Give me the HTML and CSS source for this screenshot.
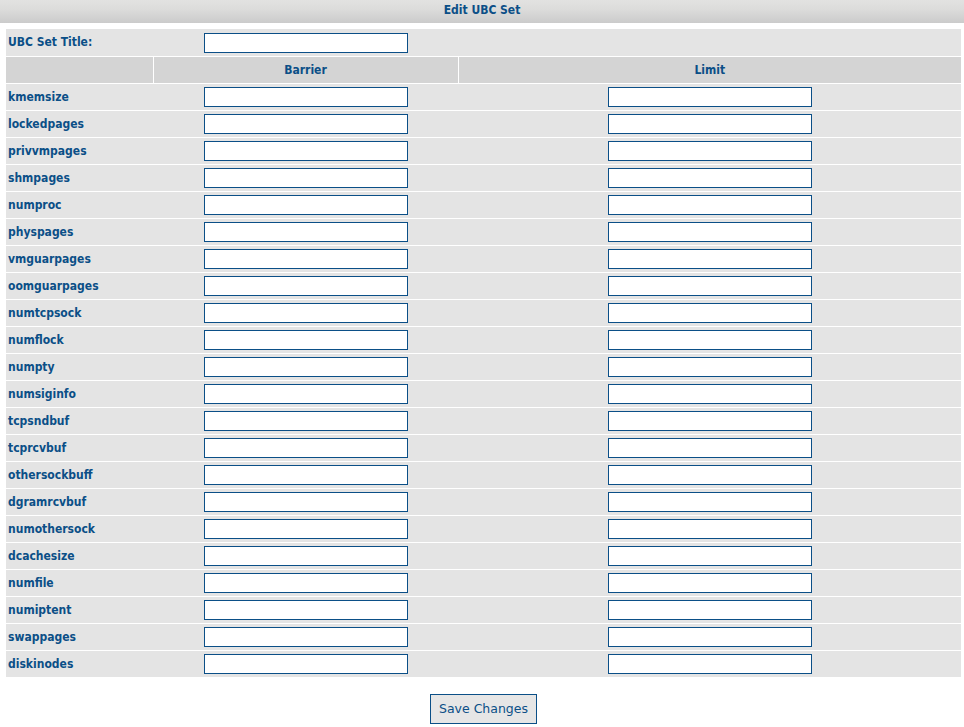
FILE: index.html
```html
<html>
    <head>
        <link rel="stylesheet" href="styles.css">
    </head>
    <body>
        <div class="titlebar">Edit UBC Set</div>
        <form class="ubc-form">
            <table class="ubc-table">
                <colgroup>
                    <col class="c-name">
                    <col class="c-barrier">
                    <col class="c-limit">
                </colgroup>
                <tr class="row">
                    <td class="label">UBC Set Title:</td>
                    <td class="field"><input type="text" name="title"></td>
                    <td></td>
                </tr>
                <tr class="head">
                    <th></th>
                    <th>Barrier</th>
                    <th>Limit</th>
                </tr>
            </table>
            <div class="actions">
                <input type="submit" class="btn" value="Save Changes">
            </div>
        </form>
        <script type="text/javascript">
            (function(){
                var params = ["kmemsize", "lockedpages", "privvmpages", "shmpages", "numproc",
                    "physpages", "vmguarpages", "oomguarpages", "numtcpsock", "numflock",
                    "numpty", "numsiginfo", "tcpsndbuf", "tcprcvbuf", "othersockbuff",
                    "dgramrcvbuf", "numothersock", "dcachesize", "numfile", "numiptent",
                    "swappages", "diskinodes"];

                var table = document.querySelector(".ubc-table");

                for (var i = 0; i < params.length; i++) {
                    var tr = document.createElement("tr");
                    tr.className = "row";
                    tr.innerHTML = '<td class="label">' + params[i] + '</td>' +
                        '<td class="field"><input type="text" name="' + params[i] + '_b"></td>' +
                        '<td class="field"><input type="text" name="' + params[i] + '_l"></td>';
                    table.appendChild(tr);
                }
            })();
        </script>
    </body>
</html>
```

FILE: styles.css
```css
:root {
    --c-text: #0b4f87;
    --c-row: #e4e4e4;
    --c-head: #d4d4d4;
    --c-border: #0b4f87;
    --f-main: "DejaVu Sans Condensed", "DejaVu Sans", Verdana, sans-serif;
    --f-btn: "DejaVu Sans", Verdana, sans-serif;
}
html, body {
    margin: 0;
    padding: 0;
}

body {
    background-color: #fff;
    font-family: var(--f-main);
    font-size: 12px;
    color: var(--c-text);
}

.titlebar {
    height: 23px;
    line-height: 21px;
    text-align: center;
    font-weight: bold;
    background: linear-gradient(to bottom, #e2e2e1 0%, #dcdcdb 40%, #cbcbcb 100%);
}

.ubc-form {
    margin: 0;
    padding: 6px 3px 0 6px;
}

.ubc-table {
    width: 100%;
    table-layout: fixed;
    border-collapse: collapse;
    border-spacing: 0;
    font-family: var(--f-main);
    font-size: 12px;
    color: var(--c-text);
}
.ubc-table .c-name {
    width: 147px;
}
.ubc-table .c-barrier {
    width: 305px;
}

.ubc-table td,
.ubc-table th {
    height: 27px;
    padding: 0;
    background-color: var(--c-row);
    border-bottom: 1px solid #fff;
    vertical-align: middle;
}
.ubc-table th {
    background-color: var(--c-head);
    text-align: center;
    font-weight: bold;
}
.ubc-table th + th {
    border-left: 1px solid #fff;
}
.ubc-table .label {
    padding-left: 2px;
    font-weight: bold;
}
.ubc-table .field {
    text-align: center;
}
.ubc-table .field input {
    box-sizing: border-box;
    width: 204px;
    height: 20px;
    margin: 1px 0 0 0;
    padding: 0 2px;
    border: 1px solid var(--c-border);
    background: #fff;
    outline: none;
    display: inline-block;
    vertical-align: middle;
}

.actions {
    padding-top: 16px;
    text-align: center;
}
.btn {
    box-sizing: border-box;
    width: 107px;
    height: 30px;
    margin: 0;
    padding: 0;
    border: 1px solid var(--c-border);
    background-color: #e6e6e6;
    color: var(--c-text);
    font-family: var(--f-btn);
    font-size: 12.5px;
}
```
